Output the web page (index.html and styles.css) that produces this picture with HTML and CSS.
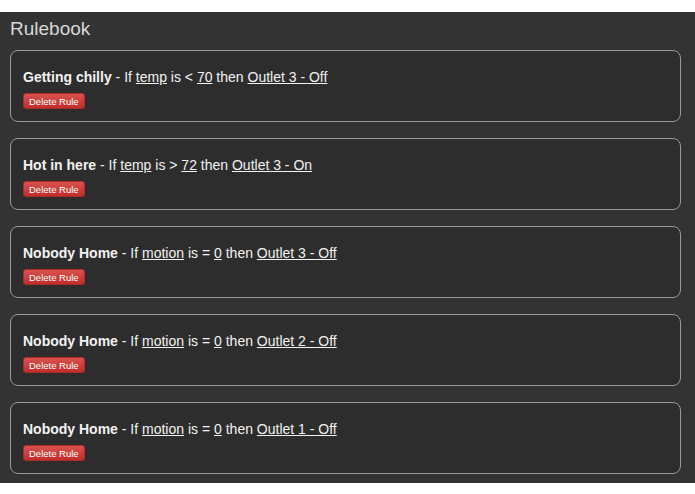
FILE: index.html
```html
<!DOCTYPE html>
<html lang="en">
<head>
  <meta charset="UTF-8" />
  <title>Rulebook</title>
  <link rel="stylesheet" href="styles.css">
</head>
<body>
  <div class="page">
    <h1>Rulebook</h1>

    <div class="rule">
      <p><b>Getting chilly</b> - If <a href="#">temp</a> is &lt; <a href="#">70</a> then <a href="#">Outlet 3 - Off</a></p>
      <button class="delete">Delete Rule</button>
    </div>

    <div class="rule">
      <p><b>Hot in here</b> - If <a href="#">temp</a> is &gt; <a href="#">72</a> then <a href="#">Outlet 3 - On</a></p>
      <button class="delete">Delete Rule</button>
    </div>

    <div class="rule">
      <p><b>Nobody Home</b> - If <a href="#">motion</a> is = <a href="#">0</a> then <a href="#">Outlet 3 - Off</a></p>
      <button class="delete">Delete Rule</button>
    </div>

    <div class="rule">
      <p><b>Nobody Home</b> - If <a href="#">motion</a> is = <a href="#">0</a> then <a href="#">Outlet 2 - Off</a></p>
      <button class="delete">Delete Rule</button>
    </div>

    <div class="rule">
      <p><b>Nobody Home</b> - If <a href="#">motion</a> is = <a href="#">0</a> then <a href="#">Outlet 1 - Off</a></p>
      <button class="delete">Delete Rule</button>
    </div>
  </div>
</body>
</html>
```

FILE: styles.css
```css
body {
  margin: 0;
  padding: 12px 0 0 0;
  background-color: white;
  font-family: "Liberation Sans", Arial, sans-serif;
}

.page {
  background-color: #333333;
  padding: 5px 14px 9px 10px;
}

h1 {
  margin: 0 0 9px 0;
  font-size: 19px;
  line-height: 24px;
  font-weight: normal;
  color: #d8d8d8;
}

.rule {
  background-color: #2d2d2d;
  border: 1px solid #9a9a9a;
  border-radius: 8px;
  padding: 16px 12px 12px 12px;
  margin-bottom: 16px;
}

.rule:last-child {
  margin-bottom: 0;
}

.rule p {
  margin: 0;
  font-size: 14px;
  line-height: 20px;
  color: #f2f2f2;
}

.rule a {
  color: #f2f2f2;
  text-decoration: underline;
}

.delete {
  margin-top: 6px;
  display: block;
  height: 16px;
  padding: 0 5px;
  font-family: "Liberation Sans", Arial, sans-serif;
  font-size: 9.5px;
  color: white;
  background: linear-gradient(#d9534f, #c12e2a);
  border: 1px solid #b02b27;
  border-radius: 3px;
  cursor: pointer;
}
```
